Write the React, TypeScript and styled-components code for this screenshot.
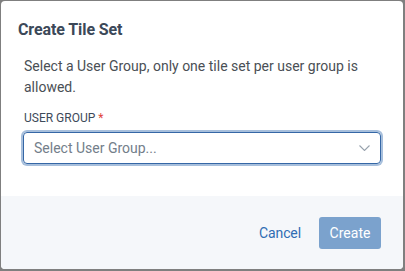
import React from 'react';
import styled, { createGlobalStyle } from 'styled-components';

const GlobalStyle = createGlobalStyle`
  html, body {
    margin: 0;
    padding: 0;
    background: #7f7f7f;
  }
  body {
    font-family: Roboto, 'Liberation Sans', sans-serif;
  }
`;

const Backdrop = styled.div`
  width: 405px;
  height: 271px;
  padding: 1px 2px 2px 1px;
  box-sizing: border-box;
  background: #7f7f7f;
`;

const Dialog = styled.div`
  height: 100%;
  display: flex;
  flex-direction: column;
  background: #fff;
  border-radius: 4px;
  overflow: hidden;
`;

const Title = styled.h2`
  margin: 0;
  padding: 19px 17px 0;
  font-size: 16px;
  font-weight: 700;
  line-height: 20px;
  color: #3b4858;
  letter-spacing: -0.1px;
`;

const Body = styled.div`
  padding: 16px 23px 0;
  height: 156px;
  box-sizing: border-box;
`;

const Message = styled.p`
  margin: 0;
  font-size: 14px;
  line-height: 21px;
  color: #4a4f55;
`;

const Label = styled.label`
  display: block;
  margin-top: 13px;
  font-size: 12px;
  line-height: 14px;
  color: #3d4a5a;
  text-transform: uppercase;
`;

const Required = styled.span`
  color: #e0443c;
`;

const SelectBox = styled.div`
  margin: 7px -1px 0 -1px;
  height: 30px;
  display: flex;
  align-items: center;
  justify-content: space-between;
  padding: 0 10px 0 10px;
  border: 1px solid #3567a6;
  border-radius: 4px;
  box-shadow: 0 0 0 2px #a7bfdc;
  color: #737e8a;
  font-size: 14px;
`;

const Footer = styled.div`
  flex: 1;
  display: flex;
  justify-content: flex-end;
  align-items: center;
  gap: 18px;
  padding: 0 22px 0 0;
  background: #f5f7fa;
`;

const LinkButton = styled.button`
  border: none;
  background: none;
  padding: 0;
  font-family: inherit;
  font-size: 14px;
  letter-spacing: -0.1px;
  color: #2f6db3;
  cursor: pointer;
`;

const PrimaryButton = styled.button<{ disabled?: boolean }>`
  width: 62px;
  height: 32px;
  border: none;
  border-radius: 3px;
  background: ${({ disabled }) => (disabled ? '#7ba2cd' : '#2f6db3')};
  color: #fff;
  font-family: inherit;
  font-size: 14px;
`;

const Chevron = () => (
  <svg width="11" height="6" viewBox="0 0 11 6" fill="none">
    <path d="M0.5 0.5l5 5 5-5" stroke="#98a2ad" strokeWidth="1.1" />
  </svg>
);

export const App = () => {
  return (
    <>
      <GlobalStyle />
      <Backdrop>
        <Dialog>
          <Title>Create Tile Set</Title>
          <Body>
            <Message>Select a User Group, only one tile set per user group is allowed.</Message>
            <Label>
              User Group <Required>*</Required>
            </Label>
            <SelectBox>
              <span>Select User Group...</span>
              <Chevron />
            </SelectBox>
          </Body>
          <Footer>
            <LinkButton>Cancel</LinkButton>
            <PrimaryButton disabled>Create</PrimaryButton>
          </Footer>
        </Dialog>
      </Backdrop>
    </>
  );
};

export default App;
